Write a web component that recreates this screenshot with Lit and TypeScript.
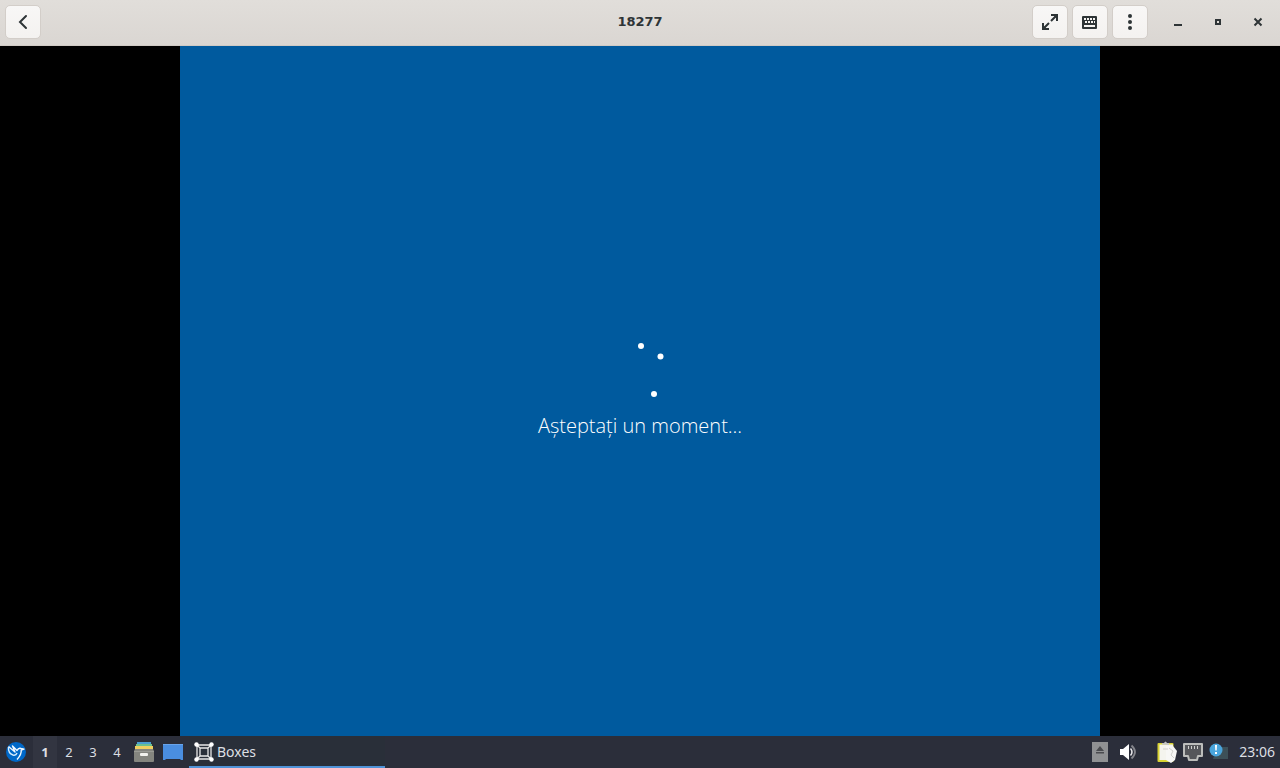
import { LitElement, html, css } from "lit";
import { customElement, state } from "lit/decorators.js";

@customElement("boxes-header")
class BoxesHeader extends LitElement {
  static styles = css`
    :host {
      display: block;
      font-family: "DejaVu Sans", sans-serif;
      color: #2e3436;
    }
    .bar {
      box-sizing: border-box;
      height: 46px;
      padding: 5px;
      display: grid;
      grid-template-columns: 1fr auto 1fr;
      align-items: start;
      background: linear-gradient(#e1deda, #dad6d2);
      border-bottom: 1px solid #d0cac4;
    }
    .title {
      margin: 0;
      font-size: 13px;
      line-height: 33px;
      font-weight: 700;
    }
    .end {
      display: flex;
      justify-content: flex-end;
    }
    .tools {
      display: flex;
      gap: 4px;
    }
    .windows {
      display: flex;
      margin-left: 10px;
      margin-right: -3px;
    }
    button {
      box-sizing: border-box;
      padding: 0;
      height: 34px;
      display: flex;
      align-items: center;
      justify-content: center;
      color: inherit;
    }
    .tool {
      width: 36px;
      border: 1px solid #d3cec9;
      border-radius: 5px;
      background: linear-gradient(#f8f7f6, #f4f2f0);
    }
    .win {
      width: 40px;
      border: 0;
      background: none;
    }
    svg {
      display: block;
    }
  `;

  render() {
    return html`
      <header class="bar">
        <div>
          <button class="tool" aria-label="Back">
            <svg width="16" height="16" viewBox="0 0 16 16">
              <path d="M11 2 5 8l6 6" fill="none" stroke="currentColor" stroke-width="2" stroke-linecap="round" />
            </svg>
          </button>
        </div>
        <h1 class="title">18277</h1>
        <div class="end">
          <div class="tools">
            <button class="tool" aria-label="Fullscreen">
              <svg width="16" height="16" viewBox="0 0 16 16" fill="none" stroke="currentColor" stroke-width="2">
                <path d="M9 1h6v6M15 1 9 7M7 15H1V9M1 15l6-6" />
                <path d="M11 1h4v4zM5 15H1v-4z" fill="currentColor" stroke="none" />
              </svg>
            </button>
            <button class="tool" aria-label="Keyboard">
              <svg width="16" height="16" viewBox="0 0 16 16">
                <rect x="0" y="2" width="15" height="13" rx="1" fill="currentColor" />
                <path d="M2 4h2v2H2zm3 0h2v2H5zm3 0h2v2H8zm3 0h2v2h-2zM3 7h2v2H3zm3 0h2v2H6zm3 0h2v2H9zm3 0h1v2h-1zM2 11h11v2H2z" fill="#f6f4f2" />
              </svg>
            </button>
            <button class="tool" aria-label="Menu">
              <svg width="16" height="16" viewBox="0 0 16 16" fill="currentColor">
                <circle cx="8" cy="2" r="2" />
                <circle cx="8" cy="8" r="2" />
                <circle cx="8" cy="14" r="2" />
              </svg>
            </button>
          </div>
          <div class="windows">
            <button class="win" aria-label="Minimize">
              <svg width="16" height="16" viewBox="0 0 16 16">
                <path d="M4 10h8v2H4z" fill="currentColor" />
              </svg>
            </button>
            <button class="win" aria-label="Maximize">
              <svg width="16" height="16" viewBox="0 0 16 16">
                <path d="M6 6h4v4H6z" fill="none" stroke="currentColor" stroke-width="2" />
              </svg>
            </button>
            <button class="win" aria-label="Close">
              <svg width="16" height="16" viewBox="0 0 16 16">
                <path d="m4.500 4.500 7 7m0-7-7 7" stroke="currentColor" stroke-width="2" />
              </svg>
            </button>
          </div>
        </div>
      </header>
    `;
  }
}

@customElement("guest-display")
class GuestDisplay extends LitElement {
  static styles = css`
    :host {
      display: flex;
      justify-content: center;
      min-height: 0;
      background: #000;
    }
    .screen {
      height: 100%;
      aspect-ratio: 4 / 3;
      display: flex;
      flex-direction: column;
      align-items: center;
      justify-content: center;
      background: #005a9e;
      color: #fff;
    }
    .spinner {
      display: block;
    }
    .message {
      margin: 10px 0 0;
      font-family: "Open Sans", "Noto Sans", sans-serif;
      font-size: 20px;
      line-height: 28px;
      font-weight: 300;
    }
  `;

  render() {
    return html`
      <main class="screen">
        <svg class="spinner" width="60" height="60" viewBox="0 0 60 60" fill="#fff" aria-hidden="true">
          <circle cx="31" cy="4" r="3" />
          <circle cx="50.500" cy="14.500" r="3" />
          <circle cx="44" cy="52" r="3" />
        </svg>
        <p class="message">Așteptați un moment...</p>
      </main>
    `;
  }
}

@customElement("desktop-panel")
class DesktopPanel extends LitElement {
  @state() private current = 1;

  static styles = css`
    :host {
      display: block;
      font-family: "Noto Sans", sans-serif;
      color: #dcdfe3;
    }
    .panel {
      height: 32px;
      display: flex;
      align-items: stretch;
      background: #2b2e3a;
    }
    button {
      box-sizing: border-box;
      padding: 0;
      border: 0;
      background: none;
      color: inherit;
      font: inherit;
      display: flex;
      align-items: center;
      justify-content: center;
    }
    svg {
      display: block;
    }
    .start {
      width: 32px;
    }
    .desks {
      display: flex;
      margin-left: 1px;
    }
    .desk {
      width: 24px;
      font-size: 13px;
      line-height: 20px;
    }
    .desk.on {
      font-weight: 700;
      background: #323541;
    }
    .quick {
      display: flex;
      padding-right: 2px;
    }
    .launch {
      width: 29px;
    }
    .task {
      width: 196px;
      justify-content: flex-start;
      gap: 3px;
      padding-left: 5px;
      border-bottom: 2px solid #4f93d8;
      border-top: 2px solid transparent;
      background: #292f39;
      font-size: 14px;
      line-height: 20px;
    }
    .tray {
      margin-left: auto;
      display: flex;
      align-items: center;
      gap: 10px;
      padding-right: 5px;
    }
    .status {
      display: flex;
      align-items: center;
      gap: 6px;
      margin-left: 9px;
    }
    .clock {
      font-size: 14px;
      line-height: 20px;
    }
  `;

  render() {
    return html`
      <footer class="panel">
        <button class="start" aria-label="Applications">
          <svg width="20" height="20" viewBox="0 0 20 20">
            <circle cx="10" cy="10" r="10" fill="#0068c8" />
            <path d="M2.500 4.500 9 10 6.500 4l4.500 4.500c1-2 2.500-2.500 4-2l3 .7-2.800 1c.5 4-1.500 6.500-4.200 9.300" fill="none" stroke="#f2f9ff" stroke-width="1.400" stroke-linejoin="round" />
            <path d="M2.500 5c-.3 4 1.500 7 4.500 8 2 .5 3.500-.5 4-2" fill="none" stroke="#d4ecfd" stroke-width="1.400" />
          </svg>
        </button>
        <nav class="desks" aria-label="Desktops">
          ${[1, 2, 3, 4].map(
            (n) => html`<button
              class="desk ${n === this.current ? "on" : ""}"
              @click=${() => (this.current = n)}
            >${n}</button>`
          )}
        </nav>
        <div class="quick">
          <button class="launch" aria-label="Files">
            <svg width="20" height="20" viewBox="0 0 20 20">
              <path d="M3 0h14v3H3z" fill="#4a9fd0" />
              <path d="M2 2h16v3H2z" fill="#6cc08e" />
              <path d="M1 4h18v3H1z" fill="#f0d060" />
              <path d="M1 7h18l1 2v10q0 1-1 1H1q-1 0-1-1V9z" fill="#84857f" />
              <path d="M0 9h20v1H0z" fill="#9a9b95" />
              <rect x="6" y="11" width="8" height="3" rx="1" fill="#f2f2ee" />
            </svg>
          </button>
          <button class="launch" aria-label="Show desktop">
            <svg width="20" height="16" viewBox="0 0 20 16">
              <path d="M0 0h20v16h-2l-1-1H3l-1 1H0z" fill="#4a8ee0" />
              <path d="M0 0h20v1H0z" fill="#69a4ea" />
            </svg>
          </button>
        </div>
        <button class="task">
          <svg width="20" height="20" viewBox="0 0 20 20">
            <path d="M3 3h14v14H3zM6 6h8v8H6zM3 3l3 3M17 3l-3 3M3 17l3-3M17 17l-3-3" fill="none" stroke="#e8e8e8" stroke-width="1.300" />
            <g fill="#fff">
              <circle cx="2.500" cy="2.500" r="2.200" />
              <circle cx="17.500" cy="2.500" r="2.200" />
              <circle cx="2.500" cy="17.500" r="2.200" />
              <circle cx="17.500" cy="17.500" r="2.200" />
            </g>
          </svg>
          Boxes
        </button>
        <div class="tray">
          <button aria-label="Eject">
            <svg width="16" height="20" viewBox="0 0 16 20">
              <path d="M0 0h16v20H0z" fill="#909193" />
              <path d="M8 4l4 5H4zM4 10h8v1.500H4z" fill="#4a4b4f" />
            </svg>
          </button>
          <button aria-label="Volume">
            <svg width="20" height="20" viewBox="0 0 20 20">
              <path d="M2 7h3l6-5v16l-6-5H2z" fill="#fff" />
              <path d="M12.500 6.500q3 3.500 0 7" fill="none" stroke="#e8e8ea" stroke-width="1.500" />
              <path d="M13.500 3.500q7 6.500 0 13" fill="none" stroke="#85868c" stroke-width="1.800" />
            </svg>
          </button>
          <div class="status">
            <button aria-label="Clipboard">
              <svg width="20" height="22" viewBox="0 0 20 22">
                <rect x="0.500" y="2" width="16" height="19" rx="1" fill="#d9d334" />
                <path d="M2.500 3.500H16V19H2.500z" fill="#f4f4ee" />
                <path d="M5 3.500V2h2q1.500-3 3 0h2v2z" fill="#c4c5c4" />
                <path d="M9 5h7l4 5-2 9-4 3-5-3z" fill="#f7f7f5" />
                <path d="m12 7 4 3-2 4 3 3M6 8h5" fill="none" stroke="#d0d0cc" />
              </svg>
            </button>
            <button aria-label="Network">
              <svg width="20" height="18" viewBox="0 0 20 18">
                <path d="M1 1h18v12h-4l-1 4H6l-1-4H1z" fill="#55565a" stroke="#bcbdbb" stroke-width="2" stroke-linejoin="round" />
                <path d="M5.500 3v3m3-3v3m3-3v3m3-3v3" stroke="#d0d0ce" />
              </svg>
            </button>
            <button aria-label="Notifications">
              <svg width="20" height="18" viewBox="0 0 20 18">
                <path d="M8 4h11v12H4z" fill="#3d5058" />
                <circle cx="7" cy="7" r="6.500" fill="#4aa5dc" />
                <path d="M6 2h2l-.3 5.500H6.300zM6 9h2v2H6z" fill="#fff" />
              </svg>
            </button>
          </div>
          <time class="clock">23:06</time>
        </div>
      </footer>
    `;
  }
}

@customElement("app-root")
class AppRoot extends LitElement {
  static styles = css`
    :host {
      display: grid;
      grid-template-rows: auto minmax(0, 1fr) auto;
      height: 100vh;
    }
  `;

  render() {
    return html`
      <boxes-header></boxes-header>
      <guest-display></guest-display>
      <desktop-panel></desktop-panel>
    `;
  }
}
